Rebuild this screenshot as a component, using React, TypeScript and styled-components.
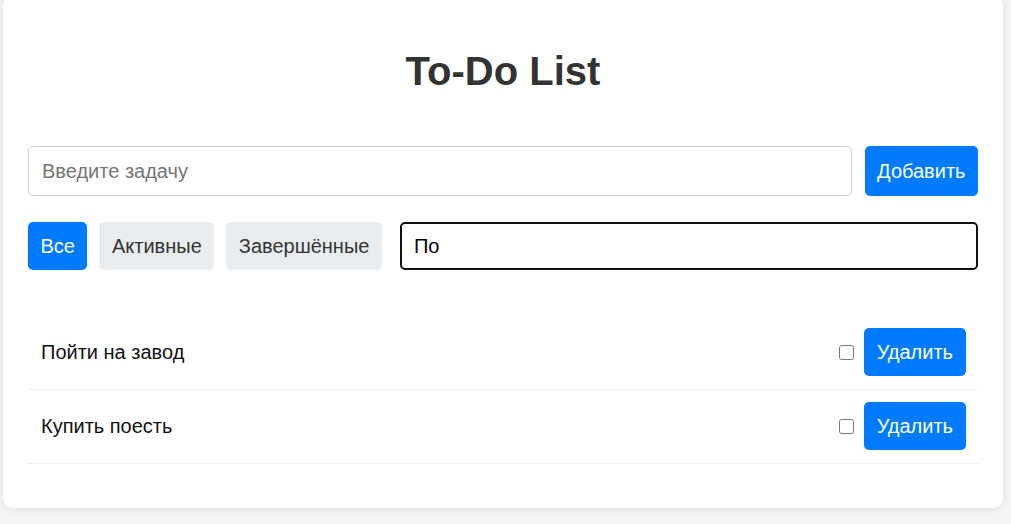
import { useState } from "react";
import styled, { createGlobalStyle } from "styled-components";

type Filter = "all" | "active" | "done";

interface Todo {
  id: number;
  text: string;
  done: boolean;
}

const initialTodos: Todo[] = [
  { id: 1, text: "Пойти на завод", done: false },
  { id: 2, text: "Купить поесть", done: false },
];

const filters: { key: Filter; label: string }[] = [
  { key: "all", label: "Все" },
  { key: "active", label: "Активные" },
  { key: "done", label: "Завершённые" },
];

const App = () => {
  const [todos, setTodos] = useState<Todo[]>(initialTodos);
  const [text, setText] = useState("");
  const [filter, setFilter] = useState<Filter>("all");
  const [search, setSearch] = useState("По");

  const addTodo = () => {
    if (!text.trim()) return;
    setTodos([...todos, { id: Date.now(), text: text.trim(), done: false }]);
    setText("");
  };

  const toggle = (id: number) =>
    setTodos(todos.map((t) => (t.id === id ? { ...t, done: !t.done } : t)));

  const remove = (id: number) => setTodos(todos.filter((t) => t.id !== id));

  const visible = todos
    .filter((t) => (filter === "all" ? true : filter === "done" ? t.done : !t.done))
    .filter((t) => t.text.toLowerCase().includes(search.toLowerCase()));

  return (
    <>
      <GlobalStyle />
      <Page>
        <Card>
          <Title>To-Do List</Title>
          <AddRow>
            <TaskInput
              placeholder="Введите задачу"
              value={text}
              onChange={(e) => setText(e.target.value)}
              onKeyDown={(e) => e.key === "Enter" && addTodo()}
            />
            <PrimaryButton onClick={addTodo}>Добавить</PrimaryButton>
          </AddRow>
          <FilterRow>
            <FilterGroup>
              {filters.map((f) => (
                <FilterButton
                  key={f.key}
                  $active={filter === f.key}
                  onClick={() => setFilter(f.key)}
                >
                  {f.label}
                </FilterButton>
              ))}
            </FilterGroup>
            <SearchInput value={search} onChange={(e) => setSearch(e.target.value)} />
          </FilterRow>
          <List>
            {visible.map((t) => (
              <Item key={t.id}>
                <ItemText $done={t.done}>{t.text}</ItemText>
                <Actions>
                  <Check type="checkbox" checked={t.done} onChange={() => toggle(t.id)} />
                  <DeleteButton onClick={() => remove(t.id)}>Удалить</DeleteButton>
                </Actions>
              </Item>
            ))}
          </List>
        </Card>
      </Page>
    </>
  );
};

export default App;

const GlobalStyle = createGlobalStyle`
  body {
    margin: 0;
    background-color: #f4f4f4;
    font-family: "Liberation Sans", Arial, sans-serif;
    overflow: hidden;
  }
`;

const Page = styled.div`
  padding-left: 3px;
  height: 524px;
`;

const Card = styled.div`
  width: 1000px;
  box-sizing: border-box;
  margin-top: -4px;
  padding: 25px;
  background-color: white;
  border-radius: 10px;
  box-shadow: 0 0 10px rgba(0, 0, 0, 0.1);
`;

const Title = styled.h1`
  margin: 27px 0 52px;
  font-size: 40px;
  line-height: 46px;
  text-align: center;
  color: #333;
`;

const AddRow = styled.div`
  display: flex;
  gap: 13px;
  height: 50px;
`;

const TaskInput = styled.input`
  flex: 1;
  box-sizing: border-box;
  height: 50px;
  padding: 0 13px;
  border: 1px solid #ccc;
  border-radius: 5px;
  font-family: inherit;
  font-size: 20px;
  color: #111;
  outline: none;

  &::placeholder {
    color: #757575;
  }
`;

const PrimaryButton = styled.button`
  box-sizing: border-box;
  height: 50px;
  padding: 0 12.5px;
  border: none;
  border-radius: 5px;
  background-color: #007bff;
  color: white;
  font-family: inherit;
  font-size: 20px;
  cursor: pointer;
`;

const FilterRow = styled.div`
  display: flex;
  align-items: center;
  margin-top: 26px;
  height: 48px;
`;

const FilterGroup = styled.div`
  display: flex;
  gap: 12px;
`;

const FilterButton = styled.button<{ $active: boolean }>`
  box-sizing: border-box;
  height: 48px;
  padding: 0 12.5px;
  border: none;
  border-radius: 5px;
  background-color: ${(p) => (p.$active ? "#007bff" : "#e9ecef")};
  color: ${(p) => (p.$active ? "white" : "#333")};
  font-family: inherit;
  font-size: 20px;
  cursor: pointer;
`;

const SearchInput = styled.input`
  flex: 1;
  box-sizing: border-box;
  height: 48px;
  margin-left: 18px;
  padding: 0 12px;
  border: 2px solid #101010;
  border-radius: 5px;
  font-family: inherit;
  font-size: 20px;
  color: #000;
  outline: none;
`;

const List = styled.ul`
  list-style: none;
  margin: 46px 0 19px;
  padding: 0;
`;

const Item = styled.li`
  display: flex;
  align-items: center;
  justify-content: space-between;
  padding: 12px 12px 13px 13px;
  border-bottom: 1px solid #eee;
`;

const ItemText = styled.span<{ $done: boolean }>`
  font-size: 20px;
  color: #111;
  text-decoration: ${(p) => (p.$done ? "line-through" : "none")};
`;

const Actions = styled.div`
  display: flex;
  align-items: center;
  gap: 10px;
`;

const Check = styled.input`
  width: 15px;
  height: 15px;
  margin: 0;
`;

const DeleteButton = styled(PrimaryButton)`
  height: 48px;
  padding: 0 13px;
`;
